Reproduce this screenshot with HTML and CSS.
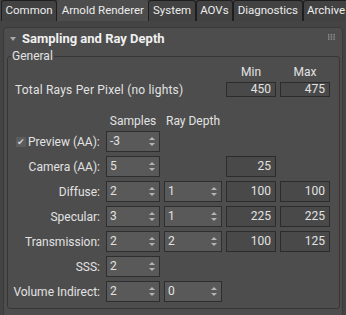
FILE: index.html
```html
<!DOCTYPE html>
<html lang="en">
<head>
    <meta charset="UTF-8">
    <title>Arnold Renderer</title>
    <link rel="stylesheet" href="styles.css">
</head>
<body>
    <div class="tabs">
        <div class="tab">Common</div>
        <div class="tab active">Arnold Renderer</div>
        <div class="tab">System</div>
        <div class="tab">AOVs</div>
        <div class="tab">Diagnostics</div>
        <div class="tab">Archive</div>
    </div>

    <div class="rollout">
        <div class="rollout-head">
            <span class="caret"></span>
            <span class="title">Sampling and Ray Depth</span>
            <svg class="grip" width="7" height="6" viewBox="0 0 7 6">
                <rect x="0" y="0" width="1.5" height="1.5"/><rect x="2.7" y="0" width="1.5" height="1.5"/><rect x="5.4" y="0" width="1.5" height="1.5"/>
                <rect x="0" y="2.2" width="1.5" height="1.5"/><rect x="2.7" y="2.2" width="1.5" height="1.5"/><rect x="5.4" y="2.2" width="1.5" height="1.5"/>
                <rect x="0" y="4.4" width="1.5" height="1.5"/><rect x="2.7" y="4.4" width="1.5" height="1.5"/><rect x="5.4" y="4.4" width="1.5" height="1.5"/>
            </svg>
        </div>

        <fieldset class="group">
            <legend>General</legend>

            <div class="row heads">
                <span class="col-head c4">Min</span>
                <span class="col-head c5">Max</span>
            </div>

            <div class="row total">
                <span class="total-label">Total Rays Per Pixel (no lights)</span>
                <span class="num c4">450</span>
                <span class="num c5">475</span>
            </div>

            <div class="row subheads">
                <span class="col-head c2">Samples</span>
                <span class="col-head c3">Ray Depth</span>
            </div>

            <div class="row field first">
                <label class="check-label"><span class="checkbox">&#10004;</span>Preview (AA):</label>
                <span class="spinner c2">-3</span>
            </div>

            <div class="row field">
                <span class="label">Camera (AA):</span>
                <span class="spinner c2">5</span>
                <span class="num c4">25</span>
            </div>

            <div class="row field">
                <span class="label">Diffuse:</span>
                <span class="spinner c2">2</span>
                <span class="spinner c3">1</span>
                <span class="num c4">100</span>
                <span class="num c5">100</span>
            </div>

            <div class="row field">
                <span class="label">Specular:</span>
                <span class="spinner c2">3</span>
                <span class="spinner c3">1</span>
                <span class="num c4">225</span>
                <span class="num c5">225</span>
            </div>

            <div class="row field">
                <span class="label">Transmission:</span>
                <span class="spinner c2">2</span>
                <span class="spinner c3">2</span>
                <span class="num c4">100</span>
                <span class="num c5">125</span>
            </div>

            <div class="row field">
                <span class="label">SSS:</span>
                <span class="spinner c2">2</span>
            </div>

            <div class="row field">
                <span class="label">Volume Indirect:</span>
                <span class="spinner c2">2</span>
                <span class="spinner c3">0</span>
            </div>
        </fieldset>
    </div>
</body>
</html>
```

FILE: styles.css
```css
body {
    margin: 0;
    width: 346px;
    height: 315px;
    overflow: hidden;
    background-color: #444444;
    font-family: "Segoe UI", Roboto, "Noto Sans", sans-serif;
    font-size: 12px;
    color: #e2e2e2;
}

/* tab strip */
.tabs {
    display: flex;
    height: 21px;
    padding-left: 1px;
}

.tab {
    flex-shrink: 0;
    padding: 0 3.5px;
    white-space: nowrap;
    font-size: 11.5px;
    line-height: 19px;
    border: 1px solid #1e1e1e;
    border-bottom: none;
    border-radius: 3px 3px 0 0;
    background-color: #424242;
    color: #ececec;
}

.tab.active {
    background-color: #4d4d4d;
    border-color: #4d4d4d;
}

/* rollout */
.rollout {
    margin: 6px 3px 0;
    height: 300px;
    border: 1px solid #393939;
    border-radius: 4px 4px 0 0;
    background-color: #4d4d4d;
}

.rollout-head {
    display: flex;
    align-items: center;
    height: 21px;
    padding: 0 6px 0 6px;
}

.caret {
    width: 0;
    height: 0;
    border-left: 3px solid transparent;
    border-right: 3px solid transparent;
    border-top: 4px solid #a8a8a8;
    margin-top: 1px;
}

.title {
    margin-left: 6px;
    font-weight: bold;
    font-size: 13px;
    color: #f0f0f0;
}

.grip {
    margin-left: auto;
    margin-right: 1px;
    margin-top: -3px;
    fill: #8c8c8c;
}

/* group box */
.group {
    margin: 0 2px 0 3px;
    padding: 0 0 6px;
    border: 1px solid #363636;
    border-radius: 3px;
}

.group legend {
    margin-left: 3px;
    padding: 0 1px;
    line-height: 14px;
}

.row {
    display: grid;
    grid-template-columns: 94px 54px 58px 50px 50px;
    column-gap: 4px;
    align-items: center;
}

.c2 { grid-column: 2; }
.c3 { grid-column: 3; }
.c4 { grid-column: 4; }
.c5 { grid-column: 5; }

.heads {
    margin-top: 2px;
    height: 14px;
}

.col-head {
    text-align: center;
    line-height: 14px;
}

.total {
    margin-top: 3px;
    height: 15px;
}

.total-label {
    grid-column: 1 / 4;
    padding-left: 7px;
    letter-spacing: 0.2px;
}

.total .num {
    height: 15px;
    line-height: 13px;
}

.subheads {
    margin-top: 17px;
    height: 14px;
}

.field {
    margin-top: 4px;
    height: 21px;
}

.field.first {
    margin-top: 3px;
}

.label {
    grid-column: 1;
    text-align: right;
    padding-right: 2px;
}

.check-label {
    grid-column: 1;
    display: flex;
    align-items: center;
    padding-left: 8px;
}

.checkbox {
    width: 10px;
    height: 10px;
    margin-right: 2px;
    background-color: #5c5c5c;
    color: #cfcfcf;
    font-size: 9px;
    line-height: 10px;
    text-align: center;
}

.spinner,
.num {
    box-sizing: border-box;
    height: 21px;
    line-height: 19px;
}

.spinner {
    position: relative;
    padding-left: 3px;
    border: 1px solid #2e2e2e;
    background-color: #595959;
}

/* up / down arrows of the spinner */
.spinner::before,
.spinner::after {
    content: "";
    position: absolute;
    right: 4px;
    border-left: 3px solid transparent;
    border-right: 3px solid transparent;
}

.spinner::before {
    top: 5px;
    border-bottom: 3px solid #b4b4b4;
}

.spinner::after {
    top: 11px;
    border-top: 3px solid #b4b4b4;
}

.num {
    padding-right: 4px;
    text-align: right;
    border: 1px solid #2c2c2c;
    background-color: #494949;
}
```
